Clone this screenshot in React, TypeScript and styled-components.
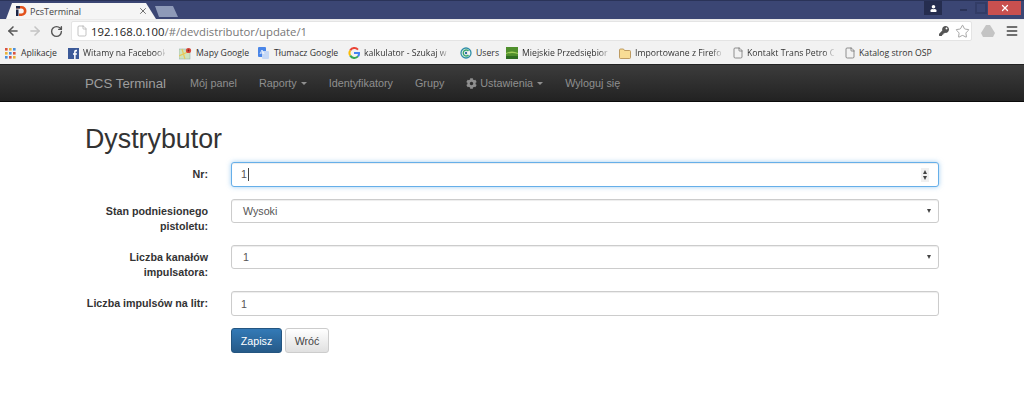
import React from 'react';
import styled, { createGlobalStyle } from 'styled-components';
import { ArrowLeft, ArrowRight, RotateCw, File, Star, X, Menu } from 'lucide-react';
import { FaCog, FaKey, FaUser } from 'react-icons/fa';

const Global = createGlobalStyle`
  html, body { margin: 0; padding: 0; background: #fff; }
  body { font-family: "Liberation Sans", Arial, sans-serif; overflow: hidden; }
  * { box-sizing: border-box; }
`;

const Page = styled.div`width: 1024px; height: 402px; overflow: hidden; background: #fff;`;

const TitleBar = styled.div`
  height: 19px; background: #3b4674; border-top: 1px solid #2a3358; display: flex; align-items: flex-end; padding-left: 6px;
`;
const Tab = styled.div`
  width: 150px; height: 16px; background: #f5f5f5; display: flex; align-items: center; gap: 3px; padding: 0 8px 0 9px;
  clip-path: polygon(0 100%, 6px 0, 140px 0, 150px 100%);
  font: 9px "Open Sans", sans-serif; color: #444;
`;
const TabTitle = styled.span`flex: 1;`;
const NewTab = styled.div`
  width: 23px; height: 11px; margin: 0 0 2px -1px; background: #8e9ab8; clip-path: polygon(0 0, 18px 0, 23px 100%, 4px 100%);
`;
const WindowControls = styled.div`margin-left: auto; height: 100%; display: flex; align-self: flex-start; padding-right: 3px;`;
const UserBadge = styled.div`
  width: 18px; height: 14px; background: #252d4f; color: #fff; display: flex; align-items: center; justify-content: center; margin-right: 11px; font-size: 7px;
`;
const MinBtn = styled.div`width: 20px; height: 14px; display: flex; align-items: center; justify-content: center; &::after { content: ""; width: 7px; height: 2px; margin-top: 4px; background: #2a3358; }`;
const MaxBtn = styled.div`width: 15px; height: 14px; display: flex; align-items: center; justify-content: center; &::after { content: ""; width: 8px; height: 8px; border: 2px solid #323c66; }`;
const CloseBtn = styled.div`width: 33px; height: 14px; background: #c9504f; color: #fff; display: flex; align-items: center; justify-content: center;`;

const Toolbar = styled.div`
  height: 23px; background: #f2f2f2; display: flex; align-items: center; padding: 0 0 0 6px; border-top: 1px solid #e9e9e9;
`;
const NavIcon = styled.div<{ $color: string; $w: number }>`
  width: ${p => p.$w}px; display: flex; align-items: center; color: ${p => p.$color};
`;
const Omnibox = styled.div`
  width: 901px; height: 20px; background: #fff; border: 1px solid #e4e4e4; border-radius: 2px; display: flex; align-items: center; padding: 0 1px 0 4px; color: #aaa;
`;
const Url = styled.span`margin-left: 3px; flex: 1; font: 11.3px "Open Sans", sans-serif; color: #777; white-space: nowrap;`;
const Host = styled.span`color: #222;`;
const OmniIcons = styled.div`display: flex; align-items: center; gap: 6px;`;
const ToolbarRight = styled.div`display: flex; align-items: center; margin-left: 9px; gap: 10px; color: #444;`;

const Bookmarks = styled.div`
  height: 22px; background: #f2f2f2; display: flex; align-items: center; padding-left: 5px; font: 8.7px "Open Sans", sans-serif; color: #333;
`;
const Bookmark = styled.div<{ $gap: number; $igap: number }>`display: flex; align-items: center; gap: ${p => p.$igap}px; margin-right: ${p => p.$gap}px; white-space: nowrap;`;
const BookmarkLabel = styled.span<{ $w: number; $fade?: boolean }>`
  display: block; width: ${p => p.$w}px;
  ${p => p.$fade ? 'mask-image: linear-gradient(to right, #000 88%, rgba(0,0,0,.15));' : ''}
`;

const NavBar = styled.nav`
  height: 38px; background: linear-gradient(to bottom, #3c3c3c, #222); border-bottom: 1px solid #0a0a0a; border-top: 1px solid #222; display: flex; align-items: center; padding-left: 85px;
`;
const Brand = styled.div`font-size: 13.3px; color: #9d9d9d; margin-right: 13px;`;
const NavItem = styled.div`font-size: 10.8px; color: #8f8f8f; padding: 0 11px; display: flex; align-items: center; white-space: nowrap;`;
const Caret = styled.span`display: inline-block; margin-left: 4px; border-top: 3px solid #8f8f8f; border-left: 3px solid transparent; border-right: 3px solid transparent;`;
const Gear = styled.span`display: inline-flex; margin-right: 3px; font-size: 11px;`;

const Content = styled.main`padding: 22px 85px 0;`;
const Title = styled.h1`margin: 0 0 8px; font-size: 26.8px; line-height: 30px; font-weight: 400; color: #333;`;

const Row = styled.div`display: grid; grid-template-columns: 123px 1fr; column-gap: 23px; align-items: start;`;
const Label = styled.label`
  display: block; text-align: right; font-size: 10.7px; line-height: 15px; font-weight: 700; color: #333; padding: 5px 0 11px;
`;
const Cell = styled.div`padding-bottom: 12px;`;
const Field = styled.div<{ $focus?: boolean; $h?: number }>`
  height: ${p => p.$h ?? 24}px; background: #fff; border: 1px solid ${p => p.$focus ? '#66afe9' : '#ccc'}; border-radius: 3px;
  box-shadow: inset 0 1px 1px rgba(0,0,0,.075)${p => p.$focus ? ', 0 0 5px rgba(102,175,233,.6)' : ''};
  display: flex; align-items: center; justify-content: space-between; padding: 0 7px 0 9px; font-size: 10.7px; color: #555;
`;
const Cursor = styled.span`display: inline-block; width: 1px; height: 13px; background: #444; margin-left: 1px; vertical-align: middle;`;
const SelectValue = styled.span`padding-left: 2px;`;
const Arrow = styled.span`border-top: 4px solid #444; border-left: 2.5px solid transparent; border-right: 2.5px solid transparent;`;
const Spinner = styled.span`
  width: 8px; height: 14px; background: #f0f0f0; display: flex; flex-direction: column; align-items: center; justify-content: center; gap: 2px; margin-right: 2px;
  &::before { content: ""; border-bottom: 4px solid #444; border-left: 2.5px solid transparent; border-right: 2.5px solid transparent; }
  &::after { content: ""; border-top: 4px solid #444; border-left: 2.5px solid transparent; border-right: 2.5px solid transparent; }
`;
const Actions = styled.div`display: flex; gap: 3px;`;
const Button = styled.button<{ $primary?: boolean }>`
  height: 25px; font: 10.7px "Liberation Sans", Arial, sans-serif; border-radius: 3px; padding: 0; cursor: pointer;
  width: ${p => p.$primary ? 51 : 44}px;
  color: ${p => p.$primary ? '#fff' : '#444'};
  border: 1px solid ${p => p.$primary ? '#245580' : '#ccc'};
  background: ${p => p.$primary ? 'linear-gradient(to bottom, #337ab7, #265a88)' : 'linear-gradient(to bottom, #fff, #e0e0e0)'};
`;

const AppsIcon = () => (
  <svg width="11" height="11" viewBox="0 0 11 11">
    {[0, 4, 8].flatMap(y => [0, 4, 8].map((x, i) => (
      <rect key={`${x}-${y}`} x={x} y={y} width="2.6" height="2.6" fill={['#d9513f', '#e8b33a', '#4a8fdb'][(i + y) % 3]} />
    )))}
  </svg>
);
const FbIcon = () => (
  <svg width="11" height="11" viewBox="0 0 11 11"><rect width="11" height="11" fill="#3b5998" /><path d="M7.6 11V6.8h1.2l.2-1.6H7.6v-1c0-.5.2-.8.8-.8H9V1.900C8.800 1.900 8.400 1.800 8 1.800c-1.100 0-1.900.7-1.900 2v1.400H5v1.600h1.100V11z" fill="#fff" /></svg>
);
const MapIcon = () => (
  <svg width="13" height="13" viewBox="0 0 13 13"><rect y="2" width="11" height="10" fill="#cfe3c0" stroke="#8aa" strokeWidth=".5" /><path d="M0 9L11 4M3 2l3 10" stroke="#e8c95a" strokeWidth="1.2" /><circle cx="9.500" cy="3.500" r="2.600" fill="#d9473a" /><circle cx="9.500" cy="3.500" r=".9" fill="#7a1f18" /></svg>
);
const TranslateIcon = () => (
  <svg width="12" height="13" viewBox="0 0 12 13"><rect width="8" height="10" rx="1" fill="#4a86e8" /><rect x="4" y="4" width="7" height="8" rx="1" fill="#c6d8f5" /><path d="M2 7l2-4 2 4M3 6h2" stroke="#fff" strokeWidth=".8" fill="none" /></svg>
);
const GoogleIcon = () => (
  <svg width="12" height="12" viewBox="0 0 12 12" fill="none" strokeWidth="2"><path d="M10 2.600A5 5 0 0 0 2.200 3.400" stroke="#ea4335" /><path d="M2.200 3.400a5 5 0 0 0 0 5.200" stroke="#fbbc05" /><path d="M2.200 8.600A5 5 0 0 0 10 9.400" stroke="#34a853" /><path d="M10 9.400A5 5 0 0 0 11 6H6" stroke="#4285f4" /></svg>
);
const UsersIcon = () => (
  <svg width="12" height="12" viewBox="0 0 12 12" fill="none"><circle cx="6" cy="6" r="5" stroke="#2f8fa8" strokeWidth="1.3" /><path d="M8.500 4A3 3 0 1 0 8.500 8" stroke="#3aa76d" strokeWidth="1.4" /><circle cx="6" cy="6" r="1.200" fill="#2f6f9f" /></svg>
);
const GreenIcon = () => (
  <svg width="12" height="12" viewBox="0 0 12 12"><rect width="12" height="12" fill="#4f8f2c" /><path d="M0 6q6-3 12 0v1q-6-2-12 0z" fill="#a3cf5a" /><rect y="9" width="12" height="3" fill="#2f6d22" /></svg>
);
const FolderIcon = () => (
  <svg width="12" height="11" viewBox="0 0 12 11"><path d="M.5 2a1 1 0 0 1 1-1h3l1 1.500h5a1 1 0 0 1 1 1V9.500a1 1 0 0 1-1 1h-9a1 1 0 0 1-1-1z" fill="#f8dc95" stroke="#b0894a" strokeWidth=".8" /></svg>
);
const PcsLogo = () => (
  <svg width="12" height="12" viewBox="0 0 12 12"><path d="M1 1h5.500a5 5 0 0 1 0 10H4V8.500h2.300a2.500 2.500 0 0 0 0-5H1z" fill="#e2521d" /><rect x="1" y="4.500" width="2.500" height="6.500" fill="#1c2748" /><rect x="1" y="1" width="4" height="2.500" fill="#1c2748" /></svg>
);

const bookmarks: { icon: React.ReactNode; text: string; w: number; gap: number; fade?: boolean; igap?: number }[] = [
  { icon: <AppsIcon />, text: 'Aplikacje', w: 36, gap: 11, igap: 5 },
  { icon: <FbIcon />, text: 'Witamy na Facebook', w: 82, gap: 14, fade: true },
  { icon: <MapIcon />, text: 'Mapy Google', w: 54, gap: 8 },
  { icon: <TranslateIcon />, text: 'Tłumacz Google', w: 65, gap: 9 },
  { icon: <GoogleIcon />, text: 'kalkulator - Szukaj w G', w: 84, gap: 12, fade: true },
  { icon: <UsersIcon />, text: 'Users', w: 22, gap: 8 },
  { icon: <GreenIcon />, text: 'Miejskie Przedsiębior', w: 87, gap: 10, fade: true },
  { icon: <FolderIcon />, text: 'Importowane z Firefo', w: 87, gap: 10, fade: true },
  { icon: <File size={12} color="#666" strokeWidth={1.4} />, text: 'Kontakt Trans Petro C', w: 87, gap: 10, fade: true, igap: 3 },
  { icon: <File size={12} color="#666" strokeWidth={1.4} />, text: 'Katalog stron OSP', w: 74, gap: 0, igap: 3 },
];

export default function App() {
  return (
    <Page>
      <Global />
      <TitleBar>
        <Tab>
          <PcsLogo />
          <TabTitle>PcsTerminal</TabTitle>
          <X size={10} color="#555" strokeWidth={2} />
        </Tab>
        <NewTab />
        <WindowControls>
          <UserBadge><FaUser /></UserBadge>
          <MinBtn />
          <MaxBtn />
          <CloseBtn><X size={10} strokeWidth={3} /></CloseBtn>
        </WindowControls>
      </TitleBar>
      <Toolbar>
        <NavIcon $color="#555" $w={22}><ArrowLeft size={14} strokeWidth={2.6} /></NavIcon>
        <NavIcon $color="#c4c4c4" $w={22}><ArrowRight size={14} strokeWidth={2.6} /></NavIcon>
        <NavIcon $color="#555" $w={21}><RotateCw size={13} strokeWidth={2.6} /></NavIcon>
        <Omnibox>
          <File size={12} strokeWidth={1.4} />
          <Url><Host>192.168.0.100</Host>/#/devdistributor/update/1</Url>
          <OmniIcons>
            <FaKey size={10} color="#555" />
            <Star size={15} color="#888" strokeWidth={1.2} />
          </OmniIcons>
        </Omnibox>
        <ToolbarRight>
          <svg width="14" height="12" viewBox="0 0 14 12"><path d="M5 0h4l5 8-2 4H2L0 8z" fill="#c4c4c4" /></svg>
          <Menu size={14} strokeWidth={2.6} />
        </ToolbarRight>
      </Toolbar>
      <Bookmarks>
        {bookmarks.map(b => (
          <Bookmark key={b.text} $gap={b.gap} $igap={b.igap ?? 4}>
            {b.icon}
            <BookmarkLabel $w={b.w} $fade={b.fade}>{b.text}</BookmarkLabel>
          </Bookmark>
        ))}
      </Bookmarks>
      <NavBar>
        <Brand>PCS Terminal</Brand>
        <NavItem>Mój panel</NavItem>
        <NavItem>Raporty<Caret /></NavItem>
        <NavItem>Identyfikatory</NavItem>
        <NavItem>Grupy</NavItem>
        <NavItem><Gear><FaCog /></Gear>Ustawienia<Caret /></NavItem>
        <NavItem>Wyloguj się</NavItem>
      </NavBar>
      <Content>
        <Title>Dystrybutor</Title>
        <Row>
          <Label>Nr:</Label>
          <Cell>
            <Field $focus $h={25}><span>1<Cursor /></span><Spinner /></Field>
          </Cell>
        </Row>
        <Row>
          <Label>Stan podniesionego pistoletu:</Label>
          <Cell>
            <Field><SelectValue>Wysoki</SelectValue><Arrow /></Field>
          </Cell>
        </Row>
        <Row>
          <Label>Liczba kanałów impulsatora:</Label>
          <Cell>
            <Field><SelectValue>1</SelectValue><Arrow /></Field>
          </Cell>
        </Row>
        <Row>
          <Label>Liczba impulsów na litr:</Label>
          <Cell>
            <Field $h={25}><span>1</span></Field>
          </Cell>
        </Row>
        <Row>
          <span />
          <Actions>
            <Button $primary>Zapisz</Button>
            <Button>Wróć</Button>
          </Actions>
        </Row>
      </Content>
    </Page>
  );
}
